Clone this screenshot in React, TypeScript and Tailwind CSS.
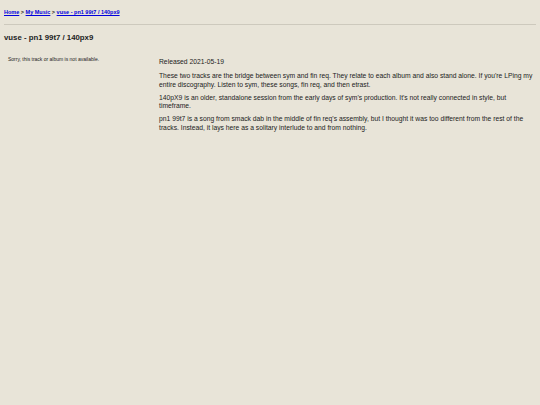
export default function App() {
  return (
    <div className="min-h-screen bg-[#e8e4d8] px-[4px] pt-[9px] text-[#222] [font-family:'Liberation_Sans',Arial,sans-serif]">
      {/* breadcrumb */}
      <div className="text-[5.5px] font-bold leading-[7px]">
        <a href="#" className="text-[#0000dd] underline">Home</a>
        {" > "}
        <a href="#" className="text-[#0000dd] underline">My Music</a>
        {" > "}
        <a href="#" className="text-[#0000dd] underline">vuse - pn1 99t7 / 140px9</a>
      </div>

      <div className="mt-[8px] h-px bg-[#cdc9bd]" />

      <h1 className="mt-[8px] text-[7.8px] font-bold leading-[9px]">vuse - pn1 99t7 / 140px9</h1>

      <div className="mt-[14px] flex">
        <div className="w-[155px] shrink-0 pl-[4px] text-[5px] leading-[6px]">
          Sorry, this track or album is not available.
        </div>
        <div className="flex-1 pr-[3px] text-[6.75px] leading-[8.3px]">
          <p className="mt-[2px]">Released 2021-05-19</p>
          <p className="mt-[6px]">
            These two tracks are the bridge between sym and fin req. They relate to each album and also stand alone. If you're LPing my entire discography. Listen to sym, these songs, fin req, and then etrast.
          </p>
          <p className="mt-[5px]">
            140pX9 is an older, standalone session from the early days of sym's production. It's not really connected in style, but timeframe.
          </p>
          <p className="mt-[5px]">
            pn1 99t7 is a song from smack dab in the middle of fin req's assembly, but I thought it was too different from the rest of the tracks. Instead, it lays here as a solitary interlude to and from nothing.
          </p>
        </div>
      </div>
    </div>
  );
}
